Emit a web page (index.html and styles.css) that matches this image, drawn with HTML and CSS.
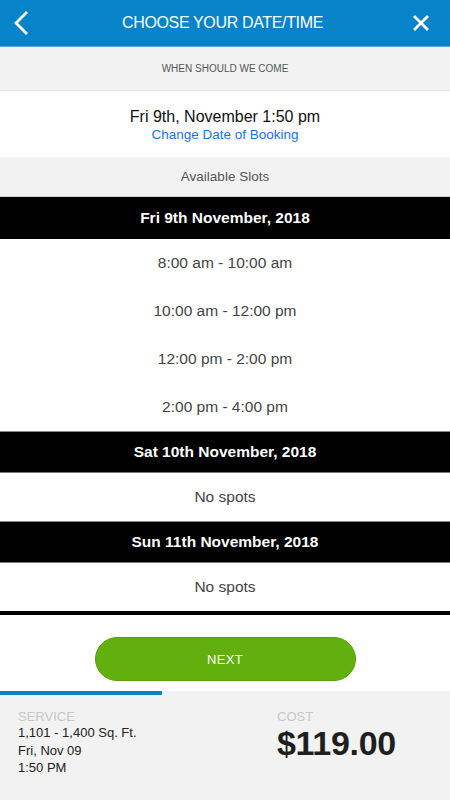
FILE: index.html
```html
<!DOCTYPE html>
<html>
<head>
<meta charset="utf-8">
<link rel="stylesheet" href="styles.css">
</head>
<body>
<div class="app">
  <header class="topbar">
    <svg class="icon back" width="16" height="24" viewBox="0 0 16 24"><path d="M13 2 L3 12 L13 22" fill="none" stroke="#fff" stroke-width="2.8" stroke-linecap="square"/></svg>
    <h1 class="title">CHOOSE YOUR DATE/TIME</h1>
    <svg class="icon close" width="18" height="18" viewBox="0 0 18 18"><path d="M2 2 L16 16 M16 2 L2 16" fill="none" stroke="#fff" stroke-width="2.8"/></svg>
  </header>
  <section class="when">WHEN SHOULD WE COME</section>
  <section class="current">
    <div class="current-date">Fri 9th, November 1:50 pm</div>
    <div class="change-link">Change Date of Booking</div>
  </section>
  <section class="avail">Available Slots</section>
  <div class="days">
    <div class="day-head first">Fri 9th November, 2018</div>
    <div class="slot">8:00 am - 10:00 am</div>
    <div class="slot">10:00 am - 12:00 pm</div>
    <div class="slot">12:00 pm - 2:00 pm</div>
    <div class="slot">2:00 pm - 4:00 pm</div>
    <div class="day-head">Sat 10th November, 2018</div>
    <div class="slot">No spots</div>
    <div class="day-head">Sun 11th November, 2018</div>
    <div class="slot">No spots</div>
  </div>
  <div class="next-wrap">
    <button class="next">NEXT</button>
  </div>
  <footer class="summary">
    <div class="progress"><div class="progress-fill" style="width:162px"></div></div>
    <div class="summary-body">
      <div class="service">
        <div class="label">SERVICE</div>
        <div class="line">1,101 - 1,400 Sq. Ft.</div>
        <div class="line">Fri, Nov 09</div>
        <div class="line">1:50 PM</div>
      </div>
      <div class="cost">
        <div class="label">COST</div>
        <div class="price">$119.00</div>
      </div>
    </div>
  </footer>
</div>
</body>
</html>
```

FILE: styles.css
```css
* { box-sizing: border-box; margin: 0; padding: 0; }
html, body { width: 450px; height: 800px; overflow: hidden; }
body { font-family: "Liberation Sans", Arial, sans-serif; background: #fff; color: #222; }
.app { display: flex; flex-direction: column; height: 800px; }

.topbar {
  height: 47px;
  background: #0683c9;
  border-bottom: 1px solid #5aa9dc;
  display: flex;
  align-items: center;
  justify-content: space-between;
  padding: 0 20px 0 13px;
}
.title { font-size: 16px; font-weight: normal; color: #fff; letter-spacing: -0.35px; margin-left: 4px; }
.icon { display: block; }

.when {
  height: 44px;
  background: #f2f2f2;
  border-bottom: 1px solid #e2e2e2;
  display: flex; align-items: center; justify-content: center;
  font-size: 10px; color: #555;
}
.current {
  height: 66px;
  display: flex; flex-direction: column; align-items: center; justify-content: center;
  padding-top: 2px;
}
.current-date { font-size: 16px; color: #111; line-height: 19px; }
.change-link { font-size: 13.5px; color: #1a73e8; line-height: 18px; }

.avail {
  height: 40px;
  background: #f2f2f2;
  border-bottom: 1px solid #cfcfcf;
  display: flex; align-items: center; justify-content: center;
  font-size: 13.5px; color: #555;
}
.days { display: flex; flex-direction: column; border-bottom: 4px solid #000; }
.day-head {
  height: 42px;
  background: #000;
  color: #fff;
  font-weight: bold;
  font-size: 15.5px;
  display: flex; align-items: center; justify-content: center;
  border-top: 1px solid #888;
  border-bottom: 1px solid #777;
}
.day-head.first { border-top: none; border-bottom: none; }
.slot {
  height: 48px;
  display: flex; align-items: center; justify-content: center;
  font-size: 15.5px; color: #444;
}

.next-wrap { flex: 1; display: flex; align-items: center; justify-content: center; padding-top: 12px; }
.next {
  width: 261px; height: 44px;
  border: 1px solid #58a00a;
  border-radius: 22px;
  background: #62b00e;
  color: #fff;
  font-family: "Liberation Sans", Arial, sans-serif;
  font-size: 13px;
  letter-spacing: 0.3px;
}

.summary { height: 109px; background: #f2f2f2; }
.progress { height: 4px; }
.progress-fill { height: 4px; background: #0683c9; }
.summary-body { display: flex; padding: 14px 0 0 18px; }
.service { width: 259px; }
.label { font-size: 13px; color: #c8c8c8; line-height: 15px; }
.line { font-size: 13px; color: #222; line-height: 17.5px; }
.price { font-size: 34px; font-weight: bold; color: #1f1f1f; line-height: 36px; margin-top: 1px; letter-spacing: -0.3px; }
```
